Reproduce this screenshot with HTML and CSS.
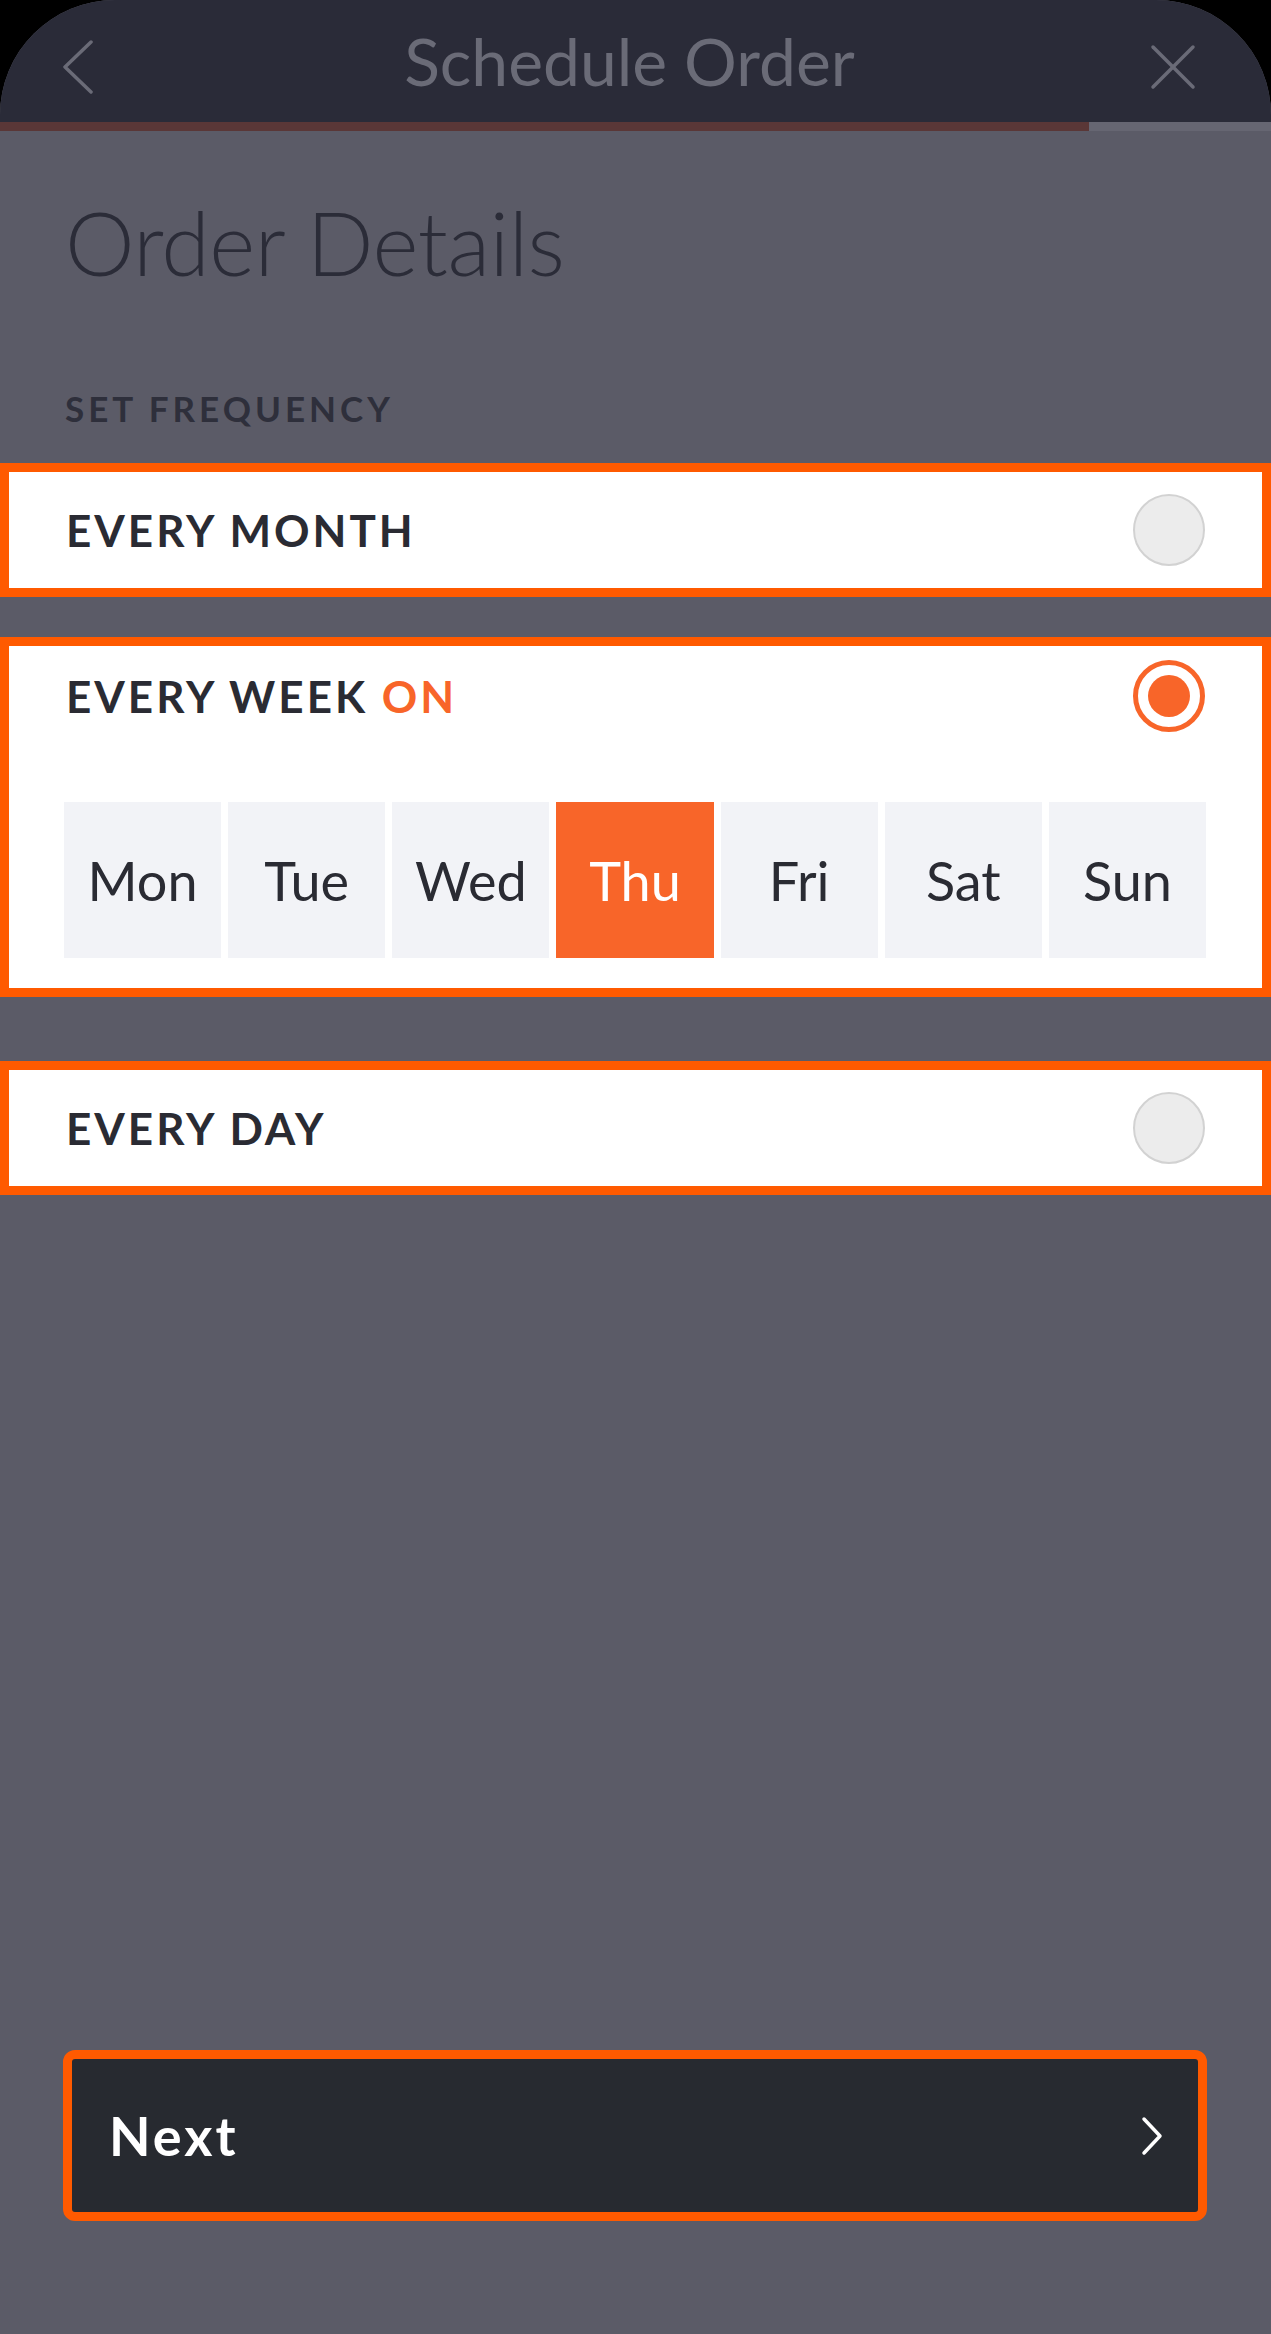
FILE: index.html
```html
<!DOCTYPE html>
<html lang="en">
<head>
  <meta charset="UTF-8" />
  <title>Schedule Order</title>
  <meta name="viewport" content="width=device-width, initial-scale=1" />
  <link rel="stylesheet" href="styles.css">
</head>
<body>
  <div class="screen">
    <header class="topbar">
      <svg class="icon back" width="34" height="56" viewBox="0 0 34 56">
        <polyline points="28,3 2,28 28,53" fill="none" stroke="#6a6b77" stroke-width="3.5" stroke-linecap="round" stroke-linejoin="round" />
      </svg>
      <div class="title">Schedule Order</div>
      <svg class="icon close" width="46" height="46" viewBox="0 0 46 46">
        <line x1="3" y1="3" x2="43" y2="43" stroke="#6a6b77" stroke-width="3.5" stroke-linecap="round" />
        <line x1="43" y1="3" x2="3" y2="43" stroke="#6a6b77" stroke-width="3.5" stroke-linecap="round" />
      </svg>
    </header>
    <div class="progress"><div class="progress-fill"></div></div>

    <div class="content">
      <h1>Order Details</h1>
      <div class="section-label">SET FREQUENCY</div>
    </div>

    <div class="option">
      <div class="option-row">
        <span class="option-label">EVERY MONTH</span>
        <span class="radio"></span>
      </div>
    </div>

    <div class="option option-week">
      <div class="option-row option-row-week">
        <span class="option-label">EVERY WEEK <span class="accent">ON</span></span>
        <span class="radio checked"></span>
      </div>
      <div class="days">
        <div class="day">Mon</div>
        <div class="day">Tue</div>
        <div class="day">Wed</div>
        <div class="day active">Thu</div>
        <div class="day">Fri</div>
        <div class="day">Sat</div>
        <div class="day">Sun</div>
      </div>
    </div>

    <div class="option option-day">
      <div class="option-row">
        <span class="option-label">EVERY DAY</span>
        <span class="radio"></span>
      </div>
    </div>

    <div class="footer">
      <button class="next">
        <span>Next</span>
        <svg width="24" height="40" viewBox="0 0 24 40">
          <polyline points="4,3 20,20 4,37" fill="none" stroke="#ffffff" stroke-width="3.5" stroke-linecap="round" stroke-linejoin="round" />
        </svg>
      </button>
    </div>
  </div>
</body>
</html>
```

FILE: styles.css
```css
body { margin: 0; background: #000; font-family: Lato, "Open Sans", sans-serif; }
.screen {
  width: 1271px; height: 2334px; background: #5b5b67;
  display: flex; flex-direction: column;
  border-radius: 115px 115px 0 0; overflow: hidden;
}

.topbar {
  height: 122px; background: #2a2b38;
  display: grid; grid-template-columns: 1fr auto 1fr; align-items: center;
  padding: 0 75px 0 63px;
}
.icon { margin-top: 12px; }
.close { justify-self: end; }
.title { font-size: 66px; color: #6a6b77; line-height: 1; }

.progress { height: 9px; background: #666672; }
.progress-fill { width: 85.7%; height: 100%; background: #5a3737; }

.content { padding: 0 65px; }
h1 {
  margin: 67px 0 0; font-size: 88px; line-height: 89px; letter-spacing: -0.5px;
  font-weight: 300; color: #2b2c38;
}
.section-label {
  margin-top: 104px; font-size: 35px; line-height: 35px;
  font-weight: 700; letter-spacing: 4px; color: #2e2f3b;
}

.option { margin-top: 37px; background: #fff; border: 9px solid #ff5a00; }
.option-week { margin-top: 40px; padding-bottom: 30px; }
.option-day { margin-top: 64px; }
.option-row {
  height: 116px; display: flex; align-items: center; justify-content: space-between;
  padding: 0 57px 0 57px;
}
.option-row-week { height: 100px; }
.option-label { font-size: 44px; font-weight: 700; letter-spacing: 3px; color: #2a2b33; }
.accent { color: #f86529; }

.radio {
  width: 68px; height: 68px; border-radius: 50%;
  background: #ececec; border: 2px solid #d2d2d2;
}
.radio.checked {
  width: 62px; height: 62px; background: #fff; border: 5px solid #f86529;
  display: flex; align-items: center; justify-content: center;
}
.radio.checked::after {
  content: ""; width: 42px; height: 42px; border-radius: 50%; background: #f86529;
}

.days {
  margin: 56px 56px 0 55px;
  display: grid; grid-template-columns: repeat(7, 1fr); gap: 7px;
}
.day {
  height: 156px; background: #f2f3f7;
  display: flex; align-items: center; justify-content: center;
  font-size: 54px; color: #2a2b33;
}
.day.active { background: #f86529; color: #fff; }

.footer { margin-top: auto; padding: 0 64px 113px 63px; }
.next {
  width: 100%; height: 171px; background: #272a30;
  border: 9px solid #ff5a00; border-radius: 12px;
  display: flex; align-items: center; justify-content: space-between;
  padding: 0 34px 0 37px; cursor: pointer;
  font-family: inherit; font-size: 54px; font-weight: 700; letter-spacing: 3px; color: #fff;
}
```
